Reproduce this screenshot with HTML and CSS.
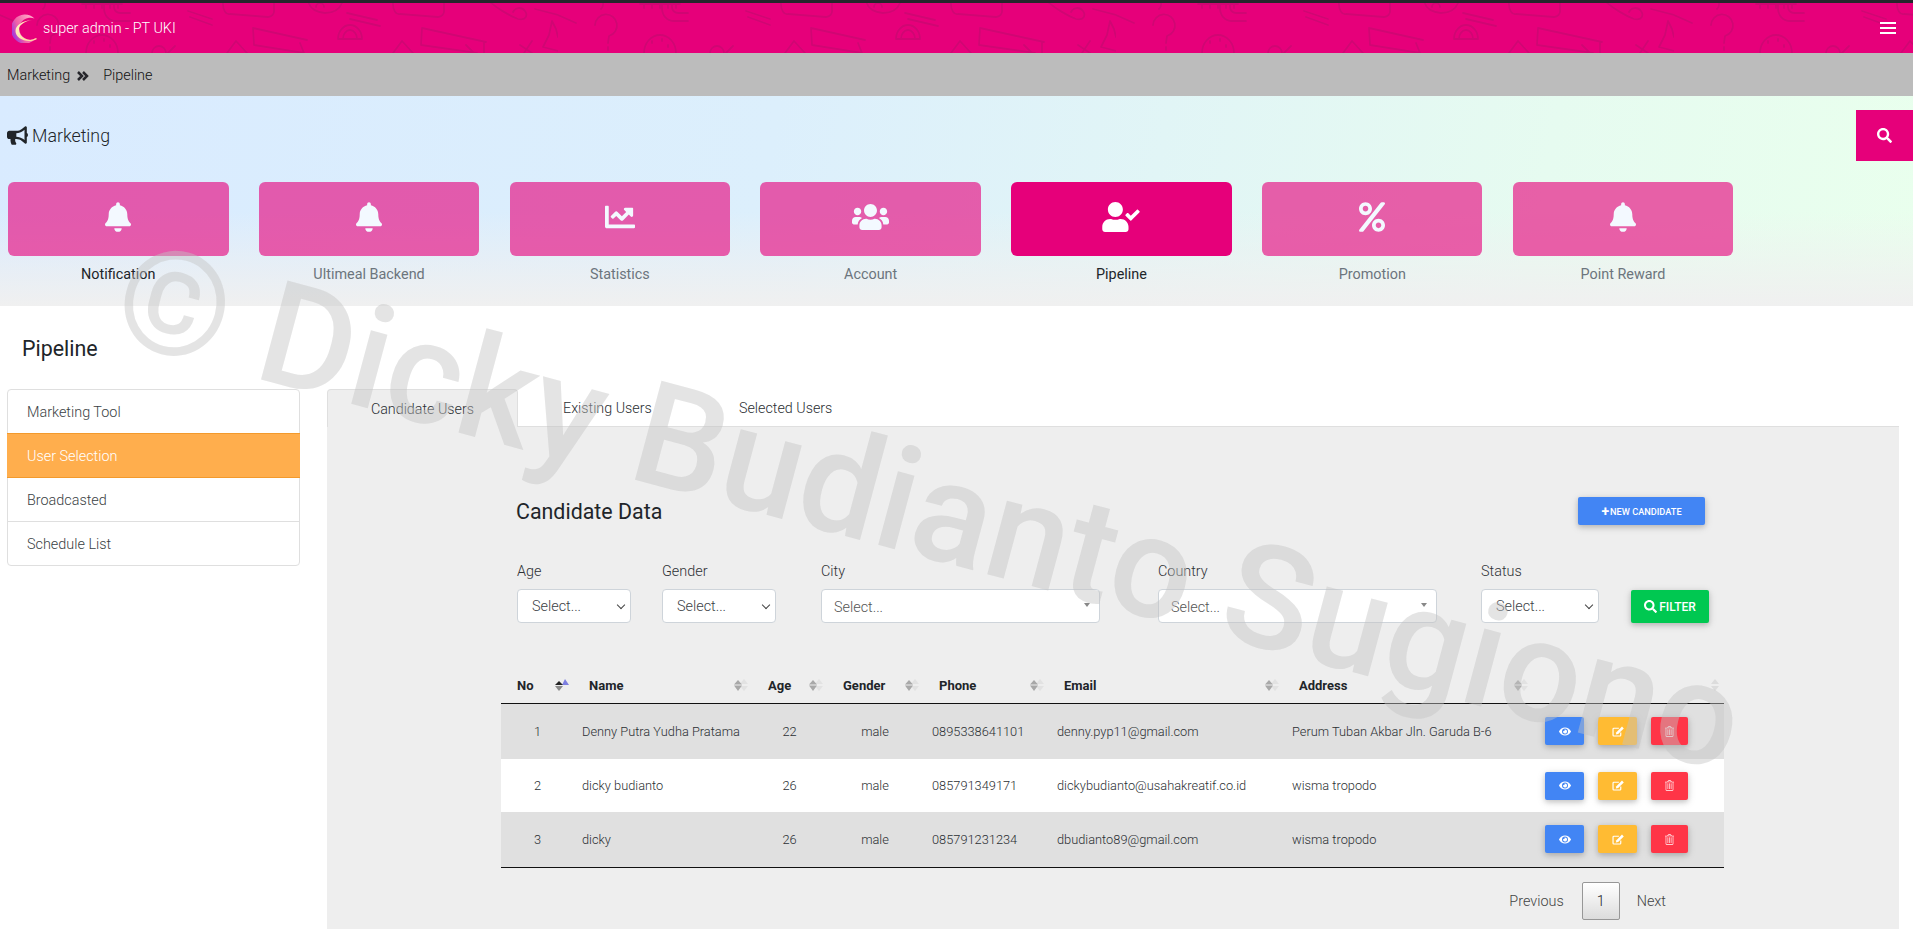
FILE: index.html
```html
<!DOCTYPE html>
<html lang="en">
<head>
<meta charset="utf-8">
<title>Pipeline</title>
<link rel="stylesheet" href="styles.css">
</head>
<body>
<svg class="defs" width="0" height="0" aria-hidden="true">
  <defs>
    <symbol id="i-bell" viewBox="0 0 448 512"><path fill="currentColor" d="M224 512c35.300 0 63.900-28.600 63.900-64H160.100c0 35.400 28.600 64 63.900 64zm215.400-149.700c-19.300-20.800-55.500-52-55.500-154.300 0-77.700-54.500-139.900-127.900-155.200V32c0-17.700-14.300-32-32-32s-32 14.300-32 32v20.800C118.600 68.100 64.100 130.300 64.100 208c0 102.300-36.200 133.500-55.500 154.300-6 6.400-8.700 14.100-8.600 21.700.1 16.400 13 32 32.100 32h383.800c19.100 0 32-15.600 32.100-32 .1-7.600-2.600-15.300-8.600-21.700z"/></symbol>
    <symbol id="i-eye" viewBox="0 0 576 512"><path fill="currentColor" d="M572.500 241.400C518.300 135.600 410.900 64 288 64S57.700 135.600 3.500 241.400a32.400 32.400 0 0 0 0 29.200C57.700 376.400 165.100 448 288 448s230.300-71.600 284.500-177.400a32.400 32.400 0 0 0 0-29.200zM288 400a144 144 0 1 1 144-144 143.900 143.900 0 0 1-144 144zm0-240a95.300 95.300 0 0 0-25.300 3.800 47.900 47.900 0 0 1-66.900 66.900A95.800 95.800 0 1 0 288 160z"/></symbol>
    <symbol id="i-edit" viewBox="0 0 576 512"><path fill="none" stroke="currentColor" stroke-width="56" d="M420 300v130a40 40 0 0 1-40 40H90a40 40 0 0 1-40-40V140a40 40 0 0 1 40-40h240"/><path fill="currentColor" d="M480 20l86 86-270 270-112 26 26-112z"/></symbol>
    <symbol id="i-trash" viewBox="0 0 448 512"><path fill="currentColor" d="M296 432h16a8 8 0 0 0 8-8V152a8 8 0 0 0-8-8h-16a8 8 0 0 0-8 8v272a8 8 0 0 0 8 8zm-160 0h16a8 8 0 0 0 8-8V152a8 8 0 0 0-8-8h-16a8 8 0 0 0-8 8v272a8 8 0 0 0 8 8zM440 64H336l-33.600-44.800A48 48 0 0 0 264 0h-80a48 48 0 0 0-38.400 19.200L112 64H8a8 8 0 0 0-8 8v16a8 8 0 0 0 8 8h24v368a48 48 0 0 0 48 48h288a48 48 0 0 0 48-48V96h24a8 8 0 0 0 8-8V72a8 8 0 0 0-8-8zM171.200 38.400A16.100 16.100 0 0 1 184 32h80a16.100 16.100 0 0 1 12.800 6.400L296 64H152zM384 464a16 16 0 0 1-16 16H80a16 16 0 0 1-16-16V96h320zm-168-32h16a8 8 0 0 0 8-8V152a8 8 0 0 0-8-8h-16a8 8 0 0 0-8 8v272a8 8 0 0 0 8 8z"/></symbol>
    <symbol id="i-search" viewBox="0 0 512 512"><path fill="currentColor" d="M505 442.700L405.300 343c-4.500-4.500-10.600-7-17-7H372c27.600-35.300 44-79.700 44-128C416 93.100 322.900 0 208 0S0 93.100 0 208s93.100 208 208 208c48.300 0 92.700-16.400 128-44v16.300c0 6.400 2.500 12.500 7 17l99.700 99.700c9.400 9.400 24.600 9.400 33.900 0l28.300-28.300c9.400-9.400 9.400-24.600.1-34zM208 336c-70.700 0-128-57.200-128-128 0-70.700 57.200-128 128-128 70.700 0 128 57.200 128 128 0 70.700-57.200 128-128 128z"/></symbol>
    <symbol id="i-sort" viewBox="0 0 14 12"><path fill="#dedede" d="M10 0l4 5H6zM10 12L6 7h8z" opacity=".8"/><path fill="#a8a8a8" d="M4 1l4 4.500H0zM4 12L0 6.500h8z"/></symbol>
    <symbol id="i-sort-on" viewBox="0 0 14 12"><path fill="#7d7fe0" d="M10 0l4 6H7z"/><path fill="#222" d="M4 2l4 4H0z"/><path fill="#8a8a8a" d="M4 12L0 7h8z"/></symbol>
    <symbol id="i-sort-faint" viewBox="0 0 14 12"><path fill="#dcdcdc" d="M10 0l4 5H6zM10 12L6 7h8z"/></symbol>
  </defs>
</svg>

<header class="topbar">
  <svg class="doodles" width="100%" height="100%" aria-hidden="true">
    <defs>
      <pattern id="doodle" x="0" y="0" width="558" height="50" patternUnits="userSpaceOnUse">
        <g fill="none" stroke="#d00673" stroke-width="1.800" stroke-linecap="round" stroke-linejoin="round">
          <path d="M0 12l18 8M535 6l23 6"/>
          <path d="M37 22a11 11 0 1 1 14 11l-1 7M50 44v3"/>
          <path d="M45 0a7 7 0 0 1-2 6"/>
          <path d="M82 1h40M86 1v4M94 1v4M102 1v4M110 1v4M118 1v4"/>
          <path d="M86 50a16 18 0 0 1 32 0M94 38v2M104 36v2M110 42v2"/>
          <path d="M104-3v8a11 13 0 0 0 11 13h15M114-3v7a6 6 0 0 0 6 6h10"/>
          <path d="M188 8l24 8M190 14l22 8"/>
          <path d="M168 50l7-7M152 50a7 7 0 0 1 14 0"/>
          <path d="M223 0a6 10 0 0 0 7 11l38 3a6 6 0 0 0 6-7V0"/>
          <path d="M227 50l9-12 11 12"/>
          <path d="M253 25l1 17 50 8M253 25l54 12M300 40l4 10"/>
          <path d="M308-3c1 8 6 12 17 13 10 0 16-5 18-13"/>
          <path d="M316 4a4 4 0 0 1 8 0"/>
          <path d="M338 36a12 14 0 0 1 24 0M343 36a7 9 0 0 1 14 0M338 36h24"/>
          <path d="M347 10l30 7M350 16l30 7"/>
          <path d="M393 0a6 10 0 0 0 7 11l38 3a6 6 0 0 0 6-7V0"/>
          <path d="M393 50l9-12 11 12"/>
          <path d="M422 25l-1 17 56 8M422 25l64 14M466 42l8 8M484 40v10"/>
          <path d="M488-3c8 8 22 16 30 19 8 2 10-4 7-8-4-5-10-3-12 1"/>
          <path d="M543 44l6-12 3-14 4 8 2 8M543 44l15 4M520 42l12 8M532 38l-8 12"/>
        </g>
      </pattern>
    </defs>
    <rect width="100%" height="100%" fill="url(#doodle)"/>
  </svg>
  <div class="brand">
    <svg class="logo" viewBox="0 0 26 29" aria-hidden="true">
      <defs>
        <linearGradient id="logoOuter" x1="0" y1=".5" x2=".8" y2=".1">
          <stop offset="0" stop-color="#a93bd6"/>
          <stop offset=".35" stop-color="#f060a8"/>
          <stop offset="1" stop-color="#ffa6c6"/>
        </linearGradient>
        <linearGradient id="logoInner" x1="0" y1="0" x2="1" y2="1">
          <stop offset="0" stop-color="#fff3c4"/>
          <stop offset="1" stop-color="#ffd79a"/>
        </linearGradient>
      </defs>
      <path fill="url(#logoOuter)" d="M22.500 4.500A14 14.500 0 1 0 24 24A11 11 0 1 1 22.500 4.500z"/>
      <path fill="url(#logoInner)" d="M20 6C10 7 3.500 11 3.500 17C3.500 25 16 30 25 25L24 24A11 11 0 0 1 7 15C7 11 13 7 20 6z"/>
    </svg>
    <span class="brand-name">super admin - PT UKI</span>
  </div>
  <button class="burger" type="button" aria-label="Menu"><span></span><span></span><span></span></button>
</header>

<nav class="crumbs">
  <span>Marketing</span>
  <svg class="crumb-sep" viewBox="0 0 12 10" aria-hidden="true"><path fill="none" stroke="currentColor" stroke-width="2.500" d="M1 1l4 4-4 4M6 1l4 4-4 4"/></svg>
  <span>Pipeline</span>
</nav>

<section class="hero">
  <div class="hero-head">
    <h1 class="hero-title">
      <svg class="hero-icon" viewBox="0 0 576 512" aria-hidden="true"><path fill="currentColor" d="M576 240c0-23.630-12.950-44.040-32-55.120V32.010C544 23.260 537.020 0 512 0c-7.120 0-14.190 2.380-19.980 7.020l-85.030 68.030C364.280 109.090 310.660 128 256 128H64c-35.350 0-64 28.650-64 64v96c0 35.350 28.650 64 64 64h33.700c-1.390 10.480-2.180 21.140-2.180 32 0 39.770 9.260 77.350 25.560 110.950 5.190 10.690 16.520 17.050 28.400 17.050h74.280c26.050 0 41.690-29.840 25.900-50.560-16.400-21.520-26.150-48.360-26.150-77.440 0-11.110 1.620-21.790 4.410-32H256c54.660 0 108.280 18.910 150.980 53.060l85.030 68.030a32.023 32.023 0 0 0 19.980 7.020c24.920 0 32-22.770 32-32V295.130C563.050 284.040 576 263.630 576 240zm-96 141.420l-33.050-26.440C392.950 311.780 325.120 288 256 288v-96c69.120 0 136.950-23.780 190.950-66.980L480 98.580v282.840z"/></svg>
      Marketing
    </h1>
    <button class="search-btn" type="button" aria-label="Search"><svg class="ic-search"><use href="#i-search"/></svg></button>
  </div>
  <div class="menu">
    <a class="menu-item is-hover">
      <span class="menu-card"><svg class="ic-bell"><use href="#i-bell"/></svg></span>
      <span class="menu-label">Notification</span>
    </a>
    <a class="menu-item">
      <span class="menu-card"><svg class="ic-bell"><use href="#i-bell"/></svg></span>
      <span class="menu-label">Ultimeal Backend</span>
    </a>
    <a class="menu-item">
      <span class="menu-card"><svg class="ic-chart" viewBox="0 0 512 512" aria-hidden="true"><path fill="currentColor" d="M496 384H64V80c0-8.800-7.200-16-16-16H16C7.200 64 0 71.200 0 80v336c0 17.700 14.300 32 32 32h464c8.800 0 16-7.200 16-16v-32c0-8.800-7.200-16-16-16zM464 96H346c-21.400 0-32.100 25.900-17 41l32.400 32.400L288 242.700l-73.400-73.400c-12.500-12.500-32.800-12.500-45.300 0l-68.700 68.700c-6.200 6.200-6.200 16.400 0 22.600l22.600 22.600c6.200 6.200 16.400 6.200 22.600 0L192 237.300l73.400 73.400c12.500 12.500 32.800 12.500 45.300 0l96-96 32.400 32.400c15.100 15.100 41 4.400 41-17V112c0-8.800-7.200-16-16-16z"/></svg></span>
      <span class="menu-label">Statistics</span>
    </a>
    <a class="menu-item">
      <span class="menu-card"><svg class="ic-users" viewBox="0 0 640 512" aria-hidden="true"><path fill="currentColor" d="M96 224c35.300 0 64-28.700 64-64s-28.700-64-64-64-64 28.700-64 64 28.700 64 64 64zm448 0c35.300 0 64-28.700 64-64s-28.700-64-64-64-64 28.700-64 64 28.700 64 64 64zm32 32h-64c-17.600 0-33.500 7.100-45.100 18.600 40.300 22.100 68.900 62 75.100 109.400h66c17.700 0 32-14.300 32-32v-32c0-35.300-28.700-64-64-64zm-256 0c61.900 0 112-50.100 112-112S381.900 32 320 32 208 82.100 208 144s50.100 112 112 112zm76.800 32h-8.300c-20.800 10-43.900 16-68.500 16s-47.600-6-68.500-16h-8.300C179.600 288 128 339.600 128 403.200V432c0 26.500 21.500 48 48 48h288c26.500 0 48-21.500 48-48v-28.800c0-63.600-51.600-115.200-115.200-115.200zm-223.700-13.400C161.500 263.100 145.600 256 128 256H64c-35.300 0-64 28.700-64 64v32c0 17.700 14.300 32 32 32h65.900c6.300-47.400 34.900-87.300 75.200-109.400z"/></svg></span>
      <span class="menu-label">Account</span>
    </a>
    <a class="menu-item is-active">
      <span class="menu-card"><svg class="ic-usercheck" viewBox="0 0 640 512" aria-hidden="true"><path fill="currentColor" d="M224 256c70.700 0 128-57.300 128-128S294.700 0 224 0 96 57.300 96 128s57.300 128 128 128zm89.600 32h-16.700c-22.200 10.200-46.900 16-72.900 16s-50.600-5.800-72.900-16h-16.700C60.200 288 0 348.200 0 422.400V464c0 26.500 21.500 48 48 48h352c26.500 0 48-21.500 48-48v-41.600c0-74.200-60.200-134.400-134.400-134.400zm323-128.400l-27.800-28.100c-4.600-4.700-12.100-4.700-16.800-.1l-104.800 104-45.500-45.800c-4.600-4.700-12.100-4.700-16.800-.1l-28.100 27.900c-4.700 4.600-4.700 12.100-.1 16.800l81.700 82.300c4.600 4.700 12.100 4.700 16.800.1l141.300-140.200c4.600-4.700 4.700-12.200.1-16.800z"/></svg></span>
      <span class="menu-label">Pipeline</span>
    </a>
    <a class="menu-item">
      <span class="menu-card"><svg class="ic-percent" viewBox="0 0 448 512" aria-hidden="true"><path fill="currentColor" d="M112 224c61.900 0 112-50.100 112-112S173.900 0 112 0 0 50.100 0 112s50.100 112 112 112zm0-160c26.500 0 48 21.500 48 48s-21.500 48-48 48-48-21.500-48-48 21.500-48 48-48zm224 224c-61.900 0-112 50.100-112 112s50.100 112 112 112 112-50.100 112-112-50.100-112-112-112zm0 160c-26.500 0-48-21.500-48-48s21.500-48 48-48 48 21.500 48 48-21.500 48-48 48zM392.300.2l31.600-.1c19.400-.1 30.900 21.800 19.700 37.800L77.400 501.600a23.950 23.950 0 0 1-19.600 10.200l-33.400.1c-19.500 0-30.900-21.900-19.700-37.800l368-463.700C377.200 4 384.500.2 392.300.2z"/></svg></span>
      <span class="menu-label">Promotion</span>
    </a>
    <a class="menu-item">
      <span class="menu-card"><svg class="ic-bell"><use href="#i-bell"/></svg></span>
      <span class="menu-label">Point Reward</span>
    </a>
  </div>
</section>

<main class="content">
  <aside class="side">
    <h2 class="side-title">Pipeline</h2>
    <ul class="side-list">
      <li>Marketing Tool</li>
      <li class="is-current">User Selection</li>
      <li>Broadcasted</li>
      <li>Schedule List</li>
    </ul>
  </aside>

  <div class="main-col">
    <div class="tabs">
      <a class="tab is-open">Candidate Users</a>
      <a class="tab">Existing Users</a>
      <a class="tab">Selected Users</a>
    </div>
    <div class="panel">
      <div class="panel-head">
        <h3 class="panel-title">Candidate Data</h3>
        <button class="btn-new" type="button"><span class="plus">+</span>NEW CANDIDATE</button>
      </div>

      <form class="filters">
        <label class="field field-sel f-age"><span>Age</span><select><option>Select...</option></select></label>
        <label class="field field-sel f-gender"><span>Gender</span><select><option>Select...</option></select></label>
        <label class="field f-city"><span>City</span><div class="fake-select">Select...</div></label>
        <label class="field f-country"><span>Country</span><div class="fake-select">Select...</div></label>
        <label class="field field-sel f-status"><span>Status</span><select><option>Select...</option></select></label>
        <button class="btn-filter" type="button"><svg class="ic-filter"><use href="#i-search"/></svg>FILTER</button>
      </form>

      <table class="grid">
        <thead>
          <tr>
            <th class="c-no">No<svg class="sort"><use href="#i-sort-on"/></svg></th>
            <th class="c-name">Name<svg class="sort"><use href="#i-sort"/></svg></th>
            <th class="c-age">Age<svg class="sort"><use href="#i-sort"/></svg></th>
            <th class="c-gender">Gender<svg class="sort"><use href="#i-sort"/></svg></th>
            <th class="c-phone">Phone<svg class="sort"><use href="#i-sort"/></svg></th>
            <th class="c-email">Email<svg class="sort"><use href="#i-sort"/></svg></th>
            <th class="c-address">Address<svg class="sort"><use href="#i-sort"/></svg></th>
            <th class="c-actions"><svg class="sort"><use href="#i-sort-faint"/></svg></th>
          </tr>
        </thead>
        <tbody>
          <tr>
            <td class="t-center">1</td><td>Denny Putra Yudha Pratama</td><td class="t-center t-nudge">22</td><td class="t-center t-nudge">male</td><td>0895338641101</td><td>denny.pyp11@gmail.com</td><td>Perum Tuban Akbar Jln. Garuda B-6</td>
            <td class="t-actions"><button class="act act-view" type="button"><svg class="ic-eye"><use href="#i-eye"/></svg></button><button class="act act-edit" type="button"><svg class="ic-edit"><use href="#i-edit"/></svg></button><button class="act act-del" type="button"><svg class="ic-trash"><use href="#i-trash"/></svg></button></td>
          </tr>
          <tr>
            <td class="t-center">2</td><td>dicky budianto</td><td class="t-center t-nudge">26</td><td class="t-center t-nudge">male</td><td>085791349171</td><td>dickybudianto@usahakreatif.co.id</td><td>wisma tropodo</td>
            <td class="t-actions"><button class="act act-view" type="button"><svg class="ic-eye"><use href="#i-eye"/></svg></button><button class="act act-edit" type="button"><svg class="ic-edit"><use href="#i-edit"/></svg></button><button class="act act-del" type="button"><svg class="ic-trash"><use href="#i-trash"/></svg></button></td>
          </tr>
          <tr>
            <td class="t-center">3</td><td>dicky</td><td class="t-center t-nudge">26</td><td class="t-center t-nudge">male</td><td>085791231234</td><td>dbudianto89@gmail.com</td><td>wisma tropodo</td>
            <td class="t-actions"><button class="act act-view" type="button"><svg class="ic-eye"><use href="#i-eye"/></svg></button><button class="act act-edit" type="button"><svg class="ic-edit"><use href="#i-edit"/></svg></button><button class="act act-del" type="button"><svg class="ic-trash"><use href="#i-trash"/></svg></button></td>
          </tr>
        </tbody>
      </table>

      <div class="pager">
        <span class="pg-link">Previous</span>
        <span class="pg-current">1</span>
        <span class="pg-link">Next</span>
      </div>
    </div>
  </div>
</main>

<div class="watermark" aria-hidden="true">© Dicky Budianto Sugiono</div>
</body>
</html>
```

FILE: styles.css
```css
* { box-sizing: border-box; }
html, body { height: 100%; }
body {
  margin: 0;
  height: 929px;
  overflow: hidden;
  position: relative;
  background: #fff;
  font-family: Roboto, "Liberation Sans", sans-serif;
  color: #212529;
}
.defs { position: absolute; }

/* top bar */
.topbar {
  position: relative;
  height: 53px;
  background: #e6007a;
  border-top: 3px solid #26262b;
  display: flex;
  align-items: center;
  justify-content: space-between;
  padding: 0 17px 0 12px;
}
.doodles { position: absolute; inset: 0; }
.brand { position: relative; display: flex; align-items: center; gap: 5px; }
.logo { width: 26px; height: 29px; }
.brand-name { color: #fff; font-size: 14.400px; font-weight: 300; }
.burger {
  position: relative;
  width: 16px;
  height: 12px;
  padding: 0;
  border: 0;
  background: none;
  display: flex;
  flex-direction: column;
  justify-content: space-between;
}
.burger span { display: block; height: 2px; background: #fff; }

/* breadcrumb */
.crumbs {
  height: 43px;
  background: #bcbcbc;
  display: flex;
  align-items: center;
  padding: 2px 0 0 7px;
  font-size: 14.400px;
  font-weight: 300;
  color: #111;
}
.crumb-sep { width: 12px; height: 10px; margin: 0 14px 0 7px; color: #26262b; }

/* hero */
.hero {
  height: 210px;
  background:
    linear-gradient(to bottom, rgba(240,240,240,0) 55%, #f0f0f0 100%),
    linear-gradient(100deg, #d9ebff 0%, #dceffc 40%, #e6fbf0 80%, #e9ffed 100%);
}
.hero-head {
  height: 86px;
  padding-top: 14px;
  display: flex;
  justify-content: space-between;
  align-items: flex-start;
}
.hero-title {
  margin: 0;
  height: 51px;
  display: flex;
  align-items: center;
  padding-left: 7px;
  font-size: 17.800px;
  font-weight: 300;
  color: #212529;
}
.hero-icon { width: 21px; height: 19px; margin-right: 4px; }
.search-btn {
  width: 57px;
  height: 51px;
  border: 0;
  background: #e6007a;
  color: #fff;
  display: flex;
  align-items: center;
  justify-content: center;
  padding: 0;
}
.ic-search { width: 15px; height: 15px; }

.menu {
  display: flex;
  gap: 30.300px;
  padding-left: 8px;
}
.menu-item {
  width: 220.500px;
  display: flex;
  flex-direction: column;
  align-items: center;
  gap: 11px;
  color: #6c757d;
  font-size: 14.400px;
}
.menu-card {
  width: 100%;
  height: 74px;
  padding-bottom: 4px;
  border-radius: 6px;
  background: rgba(230, 0, 122, .62);
  color: #f3f9ff;
  display: flex;
  align-items: center;
  justify-content: center;
}
.menu-label { line-height: 16px; }
.is-hover .menu-label { color: #212529; }
.is-active .menu-label { color: #212529; }
.is-active .menu-card { background: #e6007a; color: #fff; }
.ic-bell { width: 26px; height: 30px; }
.ic-chart { width: 30px; height: 30px; }
.ic-users { width: 37px; height: 30px; }
.ic-usercheck { width: 38px; height: 30px; }
.ic-percent { width: 26px; height: 30px; }

/* content */
.content { display: flex; }
.side { width: 327px; flex: none; padding-left: 7px; }
.side-title {
  margin: 31px 0 0 15px;
  height: 24px;
  line-height: 24px;
  font-size: 21.400px;
  font-weight: 400;
  color: #212529;
}
.side-list {
  list-style: none;
  margin: 28px 0 0;
  padding: 0;
  width: 293px;
  border: 1px solid #dfdfdf;
  border-radius: 4px;
  font-size: 14.400px;
  font-weight: 300;
  color: #3a3f44;
}
.side-list li {
  height: 44px;
  line-height: 43px;
  padding: 1px 0 0 19px;
  border-bottom: 1px solid #dfdfdf;
}
.side-list li:last-child { border-bottom: 0; height: 43px; }
.side-list .is-current {
  background: #ffae4d;
  color: #fff;
  border-top: 1px solid #f39a2c;
  border-bottom: 1px solid #f39a2c;
  margin: -1px -1px 0;
  padding: 1px 0 0 20px;
  height: 45px;
  line-height: 43px;
}
.main-col { width: 1572px; flex: none; padding-top: 83px; }
.tabs { display: flex; height: 38px; border-bottom: 1px solid #dfdfdf; font-size: 14.300px; font-weight: 300; color: #2b2f33; }
.tab { height: 38px; line-height: 39px; padding: 0 44px; }
.tab.is-open {
  width: 191px;
  background: #eee;
  border: 1px solid #dfdfdf;
  border-bottom: 0;
  border-radius: 4px 4px 0 0;
  text-align: center;
  padding: 0;
}
.tab:nth-child(2) { padding-left: 45px; padding-right: 0; width: 221px; }
.tab:nth-child(3) { padding: 0; }

.panel {
  background: #eee;
  height: 503px;
  padding: 70px 0 0 174px;
}
.panel-head { display: flex; justify-content: space-between; align-items: center; width: 1204px; height: 28px; padding-left: 15px; }
.panel-title { margin: 0; padding-top: 1px; font-size: 21.400px; font-weight: 400; color: #212529; }
.btn-new {
  width: 127px;
  height: 28px;
  border: 0;
  border-radius: 2px;
  background: #4285f4;
  color: #fff;
  font: 500 9.200px Roboto, sans-serif;
  box-shadow: 0 2px 5px rgba(0,0,0,.16), 0 2px 10px rgba(0,0,0,.12);
  padding: 0;
}
.plus { font-size: 14px; font-weight: 700; margin-right: 1px; vertical-align: -1px; }

.filters { display: flex; align-items: flex-end; padding-left: 16px; margin-top: 37px; height: 61px; }
.field { position: relative; display: flex; flex-direction: column; font-size: 14.400px; font-weight: 300; color: #2e3236; }
.field > span { height: 18px; line-height: 18px; margin-bottom: 8px; }
.field select, .fake-select {
  height: 34px;
  border: 1px solid #ced4da;
  border-radius: 4px;
  background-color: #fff;
  font: 300 14.400px Roboto, sans-serif;
  color: #3c4146;
}
.field select {
  appearance: none;
  padding-left: 14px;
}
.field-sel::after {
  content: "";
  position: absolute;
  right: 7px;
  bottom: 15px;
  width: 5px;
  height: 5px;
  border-right: 1.500px solid #444;
  border-bottom: 1.500px solid #444;
  transform: rotate(45deg);
  pointer-events: none;
}
.f-age { width: 114px; margin-right: 31px; }
.f-gender { width: 114px; margin-right: 45px; }
.f-city { width: 279px; margin-right: 58px; }
.f-country { width: 279px; margin-right: 44px; }
.f-status { width: 118px; margin-right: 32px; }
.fake-select {
  position: relative;
  line-height: 35px;
  padding-left: 12px;
  color: #555;
}
.fake-select::after {
  content: "";
  position: absolute;
  right: 9px;
  top: 13px;
  border: 3px solid transparent;
  border-top: 4px solid #888;
}
.btn-filter {
  width: 78px;
  height: 33px;
  border: 0;
  border-radius: 2px;
  background: #00c851;
  color: #fff;
  font: 500 12px Roboto, sans-serif;
  display: flex;
  align-items: center;
  justify-content: center;
  gap: 2px;
  padding: 0;
  box-shadow: 0 2px 5px rgba(0,0,0,.16), 0 2px 10px rgba(0,0,0,.12);
}
.ic-filter { width: 13px; height: 13px; }

.grid {
  width: 1223px;
  margin: 47px 0 0 0;
  table-layout: fixed;
  border-collapse: collapse;
  font-size: 12.800px;
  font-weight: 300;
  color: #2b2f33;
}
.grid thead tr { height: 33px; border-bottom: 1px solid #111; }
.grid th {
  position: relative;
  padding: 0 0 2px 15px;
  text-align: left;
  font-weight: 700;
  font-size: 13px;
  color: #212529;
}
.grid th.c-no { padding-left: 16px; }
.c-no { width: 73px; }
.c-name { width: 179px; }
.c-age { width: 75px; }
.c-gender { width: 96px; }
.c-phone { width: 125px; }
.c-email { width: 235px; }
.c-address { width: 249px; }
.sort {
  position: absolute;
  right: 5px;
  top: 9px;
  width: 14px;
  height: 12px;
}
.grid td { padding: 0 8px; white-space: nowrap; }
.grid tbody tr { height: 53px; background: #e0e0e0; }
.grid tbody tr:nth-child(2) { background: #fff; }
.grid tbody tr:first-child { height: 56px; }
.grid tbody tr:last-child { height: 55px; border-bottom: 1px solid #111; }
.t-center { text-align: center; }
.grid td.t-nudge { padding-right: 10px; }
.grid td.t-actions { padding: 0 0 0 12px; }
.act {
  width: 39px;
  height: 28px;
  border: 0;
  border-radius: 2px;
  color: #fff;
  padding: 0;
  margin-right: 14px;
  vertical-align: middle;
  box-shadow: 0 2px 5px rgba(0,0,0,.16), 0 2px 10px rgba(0,0,0,.12);
}
.act svg { display: block; margin: auto; }
.act-view { background: #4285f4; }
.act-edit { background: #ffbb33; }
.act-del { background: #ff3547; width: 37px; margin-right: 0; }
.ic-eye { width: 12px; height: 11px; }
.ic-edit { width: 12px; height: 11px; }
.ic-trash { width: 9px; height: 11px; }

.pager { display: flex; align-items: center; width: 1223px; justify-content: flex-end; margin-top: 14px; padding-right: 58px; font-size: 14.400px; font-weight: 300; color: #444; }
.pg-link { display: block; padding-top: 2px; }
.pg-current {
  width: 38px;
  height: 38px;
  line-height: 37px;
  text-align: center;
  margin: 0 17px 0 18px;
  border: 1px solid #979797;
  border-radius: 2px;
  color: #212529;
  background: linear-gradient(to bottom, #fff, #dcdcdc);
}

/* watermark */
.watermark {
  position: absolute;
  left: 120px;
  top: 206px;
  transform: rotate(15deg);
  transform-origin: 0 50%;
  white-space: nowrap;
  font: 500 144px Roboto, sans-serif;
  color: rgba(195,195,195,.45);
  pointer-events: none;
}
```
